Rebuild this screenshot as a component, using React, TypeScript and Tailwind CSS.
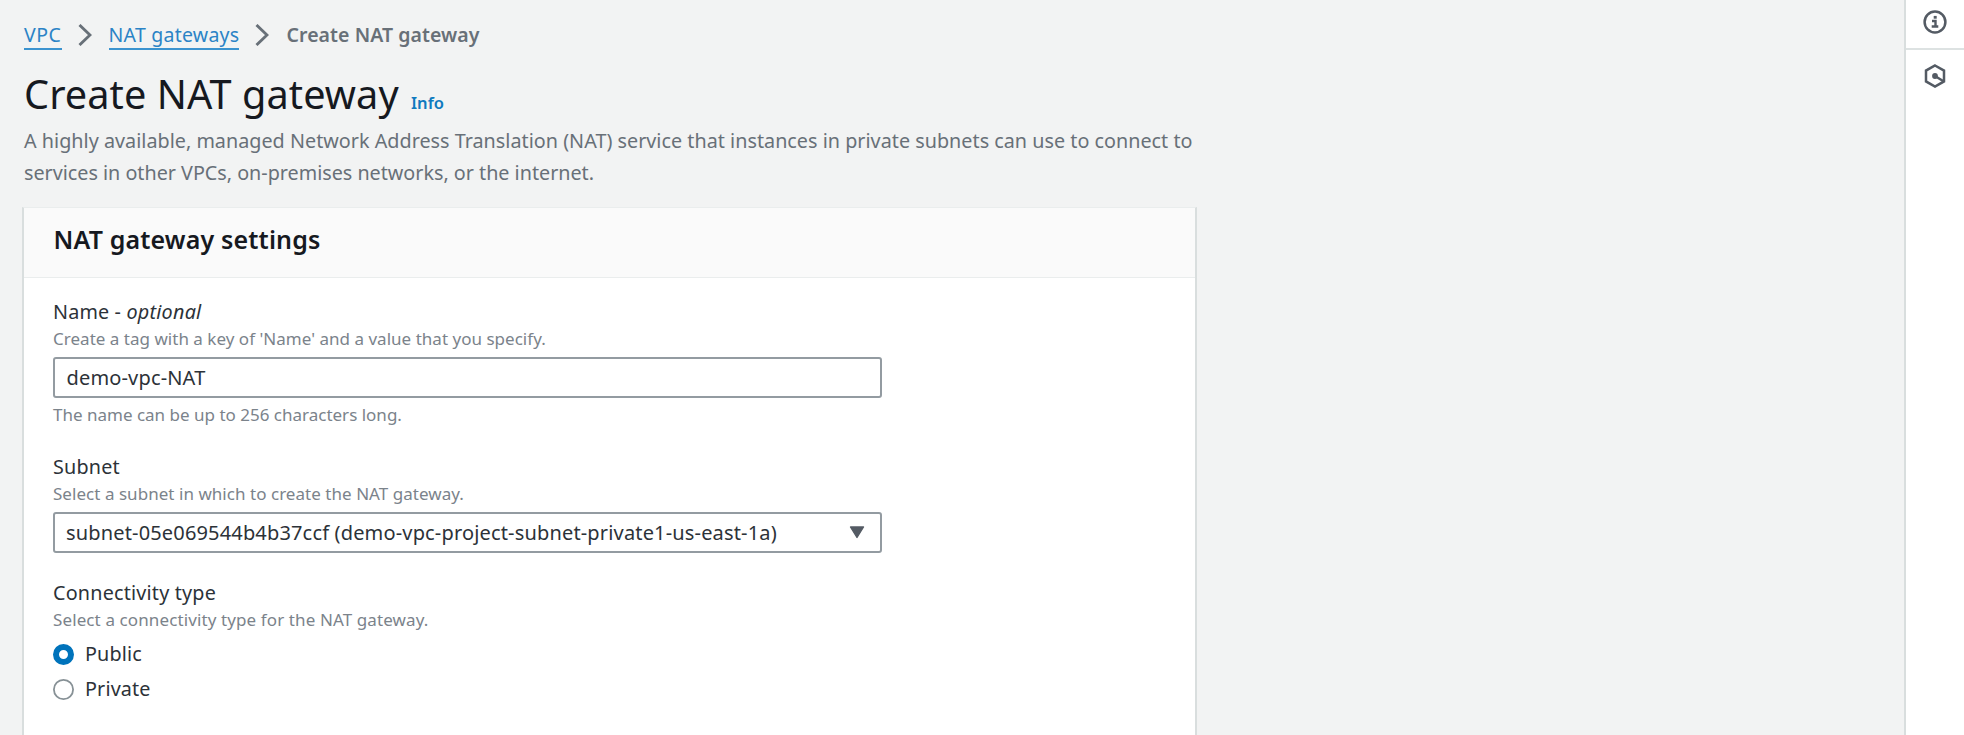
import type { ReactNode } from "react";

function Chevron({ className }: { className: string }) {
  return (
    <svg viewBox="0 0 14 22" className={`h-[22px] w-[14px] shrink-0 ${className}`} fill="none" stroke="#687078" strokeWidth="2.9">
      <path d="M1.500 1 12 11 1.500 21" />
    </svg>
  );
}

function Hint({ children, className }: { children: ReactNode; className: string }) {
  return <p className={`h-6 text-[17px] leading-6 whitespace-nowrap text-[#7b838b] ${className}`}>{children}</p>;
}

function Radio({ label, checked }: { label: string; checked?: boolean }) {
  return (
    <label className="flex h-[30px] items-center">
      <svg viewBox="0 0 21 21" className="h-[21px] w-[21px] shrink-0">
        {checked ? (
          <circle cx="10.5" cy="10.5" r="7.5" fill="#fff" stroke="#0073bb" strokeWidth="6" />
        ) : (
          <circle cx="10.5" cy="10.5" r="9.6" fill="#fff" stroke="#879196" strokeWidth="1.8" />
        )}
      </svg>
      <span className="ml-[11px] text-[19.75px] leading-[30px] tracking-[0.15px]">{label}</span>
    </label>
  );
}

export default function App() {
  return (
    <div className="flex h-[735px] w-full overflow-hidden bg-[#f2f3f3] font-['Noto_Sans','Open_Sans',sans-serif] text-[#2c3238]">
      <main className="flex-1 pt-5 pl-[22px]">
        <nav className="flex h-[30px] items-center pl-[2px] text-[19.5px] leading-[30px] whitespace-nowrap">
          <a className="w-[37.5px]">
            <span className="border-b-2 border-[#3b93cf] tracking-[0.56px] text-[#2b83c6]">VPC</span>
          </a>
          <Chevron className="mr-[17px] ml-4" />
          <a className="w-[131px]">
            <span className="border-b-2 border-[#3b93cf] tracking-[0.24px] text-[#2b83c6]">NAT gateways</span>
          </a>
          <Chevron className="mr-[18px] ml-[15px]" />
          <span className="font-semibold tracking-[0.06px] text-[#687078]">Create NAT gateway</span>
        </nav>

        <header className="mt-5 pl-[2px]">
          <div className="flex h-12 items-baseline whitespace-nowrap">
            <h1 className="w-[387px] text-[39.7px] leading-[48px] tracking-[0.05px] text-[#16191f]">Create NAT gateway</h1>
            <a className="text-[16.5px] leading-6 font-semibold text-[#0f7abf]">Info</a>
          </div>
          <p className="mt-[7px] text-[19.75px] leading-8 tracking-[0.02px] whitespace-nowrap text-[#687078]">
            A highly available, managed Network Address Translation (NAT) service that instances in private subnets can use to connect to
            <br />
            <span className="tracking-[-0.01px]">services in other VPCs, on-premises networks, or the internet.</span>
          </p>
        </header>

        <section className="mt-[18px] h-[560px] w-[1175px] border-x-2 border-t border-x-[#d9dede] border-t-[#eaeded] bg-white">
          <div className="h-[70px] border-b border-[#eaeded] bg-[#fafafa] pt-[15px] pl-[29.5px]">
            <h2 className="text-[25px] leading-8 font-semibold tracking-[0.15px] text-[#16191f]">NAT gateway settings</h2>
          </div>
          <div className="flex w-[858px] flex-col pt-[19px] pl-[29px]">
            <div className="h-[30px] text-[19.75px] leading-[30px] tracking-[0.15px] whitespace-nowrap">
              Name - <em className="tracking-[0.25px]">optional</em>
            </div>
            <Hint className="tracking-[0.02px]">Create a tag with a key of 'Name' and a value that you specify.</Hint>
            <input
              className="mt-[6px] h-[41px] rounded-[3px] border-2 border-[#939ba1] bg-white px-[11.5px] text-[20px] tracking-[0.16px] outline-none"
              defaultValue="demo-vpc-NAT"
            />
            <Hint className="mt-[5px]">The name can be up to 256 characters long.</Hint>

            <div className="mt-[25px] h-[30px] text-[19.75px] leading-[30px] tracking-[0.2px]">Subnet</div>
            <Hint className="tracking-[0.04px]">Select a subnet in which to create the NAT gateway.</Hint>
            <button className="mt-[6px] flex h-[41px] items-center justify-between rounded-[3px] border-2 border-[#939ba1] bg-white pr-[15px] pl-[11px] text-[20px] leading-[30px] tracking-[0.16px]">
              <span>subnet-05e069544b4b37ccf (demo-vpc-project-subnet-private1-us-east-1a)</span>
              <svg viewBox="0 0 16 13" className="h-[13px] w-4">
                <path d="M1.500 1h13L8 11.500z" fill="#545b64" stroke="#545b64" strokeWidth="1.4" strokeLinejoin="round" />
              </svg>
            </button>

            <div className="mt-[25px] h-[30px] text-[19.75px] leading-[30px] tracking-[0.2px]">Connectivity type</div>
            <Hint className="tracking-[0.11px]">Select a connectivity type for the NAT gateway.</Hint>
            <div className="mt-[7px] flex flex-col gap-[5px]">
              <Radio label="Public" checked />
              <Radio label="Private" />
            </div>
          </div>
        </section>
      </main>

      <aside className="flex w-[60px] flex-col border-l-2 border-[#d9dede] bg-white">
        <div className="flex h-[50px] justify-center border-b-2 border-[#dde2e2] pt-[10px] pr-px">
          <svg viewBox="0 0 24 24" className="h-6 w-6" fill="none" stroke="#545b64">
            <circle cx="12" cy="12" r="10.4" strokeWidth="2.5" />
            <path d="M9 11h3.500v5.500M8.700 16.500h6.600" strokeWidth="2.4" />
            <path d="M10.700 7.300h3" strokeWidth="2.8" />
          </svg>
        </div>
        <div className="flex justify-center pt-[14px] pr-px">
          <svg viewBox="0 0 24 24" className="h-6 w-6" fill="none" stroke="#545b64">
            <path d="M12 1.500 21 6.600v10.800L12 22.500 3 17.400V6.600z" strokeWidth="2.5" />
            <path d="m12 12 8.500 5.200" strokeWidth="2.5" />
            <circle cx="12" cy="12" r="2.900" fill="#545b64" stroke="none" />
          </svg>
        </div>
      </aside>
    </div>
  );
}
